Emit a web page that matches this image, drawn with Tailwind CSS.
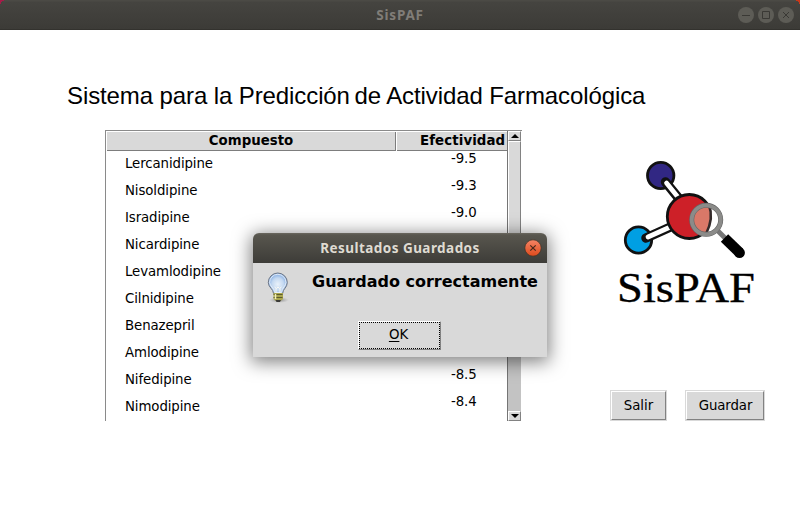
<!DOCTYPE html>
<html lang="es">
<head>
<meta charset="utf-8">
<title>SisPAF</title>
<script src="https://cdn.jsdelivr.net/npm/@tailwindcss/browser@4"></script>
</head>
<body class="relative flex h-[530px] w-[800px] flex-col overflow-hidden bg-white font-['DejaVu_Sans',sans-serif] text-[13.33px] text-black">
  <header class="grid h-[30px] shrink-0 grid-cols-[1fr_auto_1fr] items-center border-b border-[#33322e] bg-[linear-gradient(#4b4a45_0,#4b4a45_1px,#454440_2px,#3c3b37_100%)]">
    <span></span>
    <h1 class="font-['Noto_Sans',sans-serif] text-[13.5px] leading-[30px] font-bold tracking-[0.8px] text-[#807d78]">SisPAF</h1>
    <div class="flex justify-end gap-1 pr-1.5">
      <svg class="size-4" viewBox="0 0 16 16"><circle cx="8" cy="8" r="8" fill="#5d5c56"/><path d="M4 8.5h8" stroke="#3a3935"/></svg>
      <svg class="size-4" viewBox="0 0 16 16"><circle cx="8" cy="8" r="8" fill="#5d5c56"/><path d="M4.5 4.5h7v7h-7z" fill="none" stroke="#3a3935"/></svg>
      <svg class="size-4" viewBox="0 0 16 16"><circle cx="8" cy="8" r="8" fill="#5d5c56"/><path d="M5 5l6 6M11 5l-6 6" stroke="#3a3935"/></svg>
    </div>
  </header>
  <svg class="absolute top-0 left-0 size-[5px]" viewBox="0 0 5 5"><path d="M0 0H4V1H2V2H1V4H0z" fill="#a51c48"/></svg>
  <svg class="absolute top-0 right-0 size-[5px]" viewBox="0 0 5 5"><path d="M1 0H5V4H4V2H3V1H1z" fill="#c9381b"/></svg>

  <main class="flex flex-col pt-[52px]">
    <h2 class="ml-[67px] h-12 w-[600px] font-['Liberation_Sans',sans-serif] text-[24px] leading-[28px] tracking-[-0.1px] whitespace-nowrap">Sistema para la Predicción<span class="-ml-[2px]"> de Actividad Farmacológica</span></h2>
    <div class="flex">
      <section class="ml-[105px] flex h-[291px] w-[417px] border-t border-l border-[#8a8a8a]">
        <div class="w-[401px] pl-px pt-px">
          <div class="flex h-[19px] w-[401px] font-bold">
            <div class="w-[289px] overflow-hidden border-r border-b border-[#7d7d7d] bg-[#d9d9d9] text-center leading-[18px]">Compuesto</div>
            <div class="ml-px w-[110px] overflow-hidden border-b border-[#7d7d7d] bg-[#d9d9d9] pl-[23px] leading-[18px] tracking-[0.1px]">Efectividad</div>
          </div>
          <div class="-mt-px flex leading-[27px]">
            <ul class="w-[330px] pl-[18px] tracking-[-0.1px]">
              <li>Lercanidipine</li><li>Nisoldipine</li><li>Isradipine</li><li>Nicardipine</li><li>Levamlodipine</li><li>Cilnidipine</li><li>Benazepril</li><li>Amlodipine</li><li>Nifedipine</li><li>Nimodipine</li>
            </ul>
            <ul class="-mt-[5px] pl-[14px] tracking-[-0.1px]">
              <li>-9.5</li><li>-9.3</li><li>-9.0</li><li class="h-[135px]"></li><li>-8.5</li><li>-8.4</li>
            </ul>
          </div>
        </div>
        <div class="mr-px flex w-[14px] flex-col border-l border-[#757575] bg-[#c3c3c3]">
          <div class="flex h-[10px] items-center justify-center border border-t-white border-l-white border-r-[#828282] border-b-[#828282] bg-[#d9d9d9]"><svg class="h-1 w-2" viewBox="0 0 8 4"><path d="M0 4L4 0l4 4z"/></svg></div>
          <div class="h-[210px] border border-t-white border-l-white border-r-[#828282] border-b-[#828282] bg-[#d9d9d9]"></div>
          <div class="flex-1"></div>
          <div class="flex h-[10px] items-center justify-center border border-t-white border-l-white border-r-[#828282] border-b-[#828282] bg-[#d9d9d9]"><svg class="h-1 w-2" viewBox="0 0 8 4"><path d="M0 0h8L4 4z"/></svg></div>
        </div>
      </section>
      <aside class="ml-[88px] flex w-[155px] flex-col">
        <svg class="mt-5 h-[160px] w-[155px]" viewBox="610 150 155 160">
          <g stroke="#111" stroke-width="2.8">
            <circle cx="660.7" cy="175.5" r="13.2" fill="#312783"/>
            <circle cx="638.5" cy="240" r="13.2" fill="#009fe3"/>
          </g>
          <g stroke-linecap="round">
            <path d="M665.5 182l17 21M646 238l30-13.5" stroke="#111" stroke-width="9.5"/>
            <path d="M666.5 183l17 21M648 237l30-13.5" stroke="#fff" stroke-width="4.7"/>
          </g>
          <circle cx="689.3" cy="216.5" r="22" fill="#cd2028" stroke="#111" stroke-width="2.8"/>
          <path d="M717 230l9 9" stroke="#777" stroke-width="5"/>
          <circle cx="706" cy="220" r="14.5" fill="#fff"/>
          <path d="M699 206Q693 210 692 220Q693 230 699 234L705 234Q711 226 711 216Q711 211 709 206z" fill="#d97868"/>
          <path d="M709 205Q714 218 706 234" fill="none" stroke="#332a2a" stroke-width="2.6"/>
          <circle cx="706.2" cy="219.8" r="14.5" fill="none" stroke="#666" stroke-width="5"/>
          <circle cx="706.2" cy="219.8" r="14.5" fill="none" stroke="#8b8b89" stroke-width="3.8"/>
          <path d="M724.5 238l15 14.500" stroke="#000" stroke-width="10.5"/>
          <circle cx="739.5" cy="252.7" r="5.4"/>
          <text x="617" y="301.500" font-family="'Liberation Serif',serif" font-size="41.5" stroke="#000" stroke-width=".3" textLength="138" lengthAdjust="spacingAndGlyphs">SisPAF</text>
        </svg>
        <div class="mt-[80px] flex justify-between">
          <button class="h-[31px] w-[57px] border border-[#d9d9d9] bg-white"><span class="block h-[29px] w-[55px] border border-t-white border-l-white border-r-[#828282] border-b-[#828282] bg-[#d9d9d9] leading-[28px]">Salir</span></button>
          <button class="h-[31px] w-[80px] border border-[#d9d9d9] bg-white"><span class="block h-[29px] w-[78px] border border-t-white border-l-white border-r-[#828282] border-b-[#828282] bg-[#d9d9d9] pl-px leading-[28px] tracking-[-0.1px]">Guardar</span></button>
        </div>
      </aside>
    </div>
  </main>

  <div role="dialog" class="absolute top-[233px] left-[253px] flex h-[124px] w-[294px] flex-col rounded-t-[6px] bg-[#d9d9d9] shadow-[0_3px_18px_2px_rgba(0,0,0,0.5)]">
    <div class="relative flex h-[30px] shrink-0 items-center justify-center rounded-t-[6px] bg-[linear-gradient(#6b685f_0,#58564e_2px,#3d3c38_100%)]">
      <h3 class="font-['Noto_Sans',sans-serif] text-[13.5px] leading-[30px] font-bold tracking-[0.45px] text-[#dfdbd2]">Resultados Guardados</h3>
      <svg class="absolute top-[6px] right-[5px] size-[18px]" viewBox="0 0 18 18"><defs><linearGradient id="c" x2="0" y2="1"><stop stop-color="#f58466"/><stop offset="1" stop-color="#de4a1c"/></linearGradient></defs><circle cx="9" cy="9" r="8.2" fill="url(#c)" stroke="#3a3227" stroke-width=".7"/><path d="M6.3 6.3l5.4 5.4M11.7 6.3l-5.4 5.4" stroke="#46281b" stroke-width="1.2"/></svg>
    </div>
    <div class="flex h-[58px]">
      <svg class="mt-[9px] ml-[13px] h-[32px] w-[24px]" viewBox="0 0 24 32">
        <defs><radialGradient id="b" cy=".55"><stop stop-color="#e9f1fa"/><stop offset=".6" stop-color="#c5d9f1"/><stop offset="1" stop-color="#86aee2"/></radialGradient><radialGradient id="s"><stop stop-color="#666" stop-opacity=".75"/><stop offset="1" stop-color="#999" stop-opacity="0"/></radialGradient></defs>
        <ellipse cx="13" cy="28" rx="10" ry="3" fill="url(#s)"/>
        <path d="M7.500 21.500C7.500 17 2.300 15.500 2.300 10.500a9.500 9.500 0 0 1 19 0C21.300 15.500 16.700 17 16.700 21.500z" fill="url(#b)" stroke="#6f7785"/>
        <path d="M8.700 20.500C8.500 16 3.600 14 3.600 10.500a8.200 8.200 0 0 1 16.400 0C20 14 15.700 16 15.500 20.500z" fill="none" stroke="#f4f8fd" stroke-width=".8"/>
        <path d="M8.500 15l2 1.500 1.500-1.500 1.500 1.500 2-1.500M10 16.500v4M14 16.500v4" fill="none" stroke="#f9f9f5"/>
        <path d="M7.500 21H17v6l-2.500 2H10L7.500 27z" fill="#aaa64d"/>
        <path d="M7.500 22.500h9M7.500 25.500h9" stroke="#5e5c2d"/>
        <path d="M9.500 22v5" stroke="#f1efb8" stroke-width="1.500"/>
        <path d="M9.500 28H15l-1 2h-3.500z" fill="#3b3b37"/>
      </svg>
      <p class="ml-[22px] pt-[8px] text-[16px] leading-[22px] font-bold whitespace-nowrap">Guardado correctamente</p>
    </div>
    <button class="ml-[105px] h-[29px] w-[83px] border border-t-white border-l-white border-r-[#828282] border-b-[#828282]"><span class="block h-[27px] w-[81px] border border-dotted border-black pr-[2px] leading-[24px]"><span class="underline underline-offset-2">O</span>K</span></button>
  </div>
</body>
</html>
